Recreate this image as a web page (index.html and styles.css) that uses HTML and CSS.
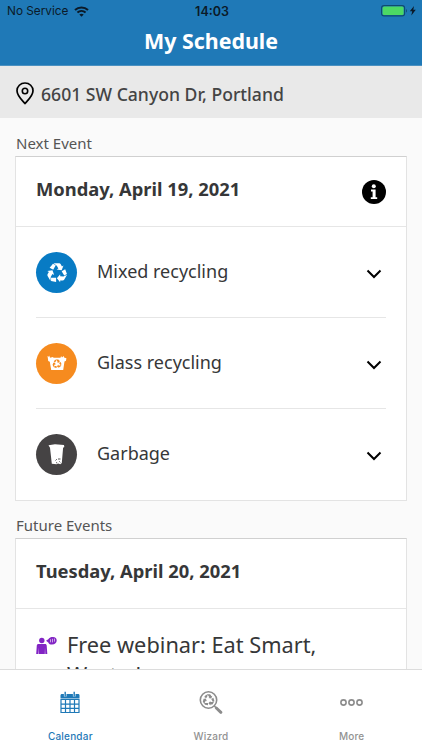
FILE: index.html
```html
<!DOCTYPE html>
<html lang="en">

<head>
    <meta charset="UTF-8">
    <meta name="viewport" content="width=device-width, initial-scale=1.0">
    <title>My Schedule</title>
    <link rel="stylesheet" href="styles.css">
</head>

<body>
    <!-- Shared recycling symbol -->
    <svg class="symbols" width="0" height="0">
        <symbol id="recycle" viewBox="0 0 24 24">
            <g id="recycle-arrow">
                <path d="M8.2 2.5h6.1c.8 0 1.400.4 1.800 1.100l1.300 2.300 1.700-1-2 5.300-5.500-1 1.900-1.100-1.700-3z" />
                <path d="M7.600 3l3 1.700-2.700 4.800-3.900-2.200z" />
            </g>
            <use href="#recycle-arrow" transform="rotate(120 12 13)" />
            <use href="#recycle-arrow" transform="rotate(240 12 13)" />
        </symbol>
    </svg>

    <div class="app">
        <header class="header">
            <div class="status-bar">
                <div class="status-left">
                    <span>No Service</span>
                    <svg width="15" height="11" viewBox="0 0 15 11">
                        <path d="M1 4C4.700.6 10.300.6 14 4" fill="none" stroke="#0b1a28" stroke-width="2.100" />
                        <path d="M3.400 6.500c2.300-2 5.900-2 8.200 0" fill="none" stroke="#0b1a28" stroke-width="2" />
                        <path d="M5.300 8.500c1.300-1.100 3.100-1.100 4.400 0L7.500 10.700z" fill="#0b1a28" />
                    </svg>
                </div>
                <div class="status-time">14:03</div>
                <div class="status-right">
                    <svg width="36" height="12" viewBox="0 0 36 12">
                        <rect x=".6" y=".6" width="23" height="10.300" rx="2.500" fill="none" stroke="#0f4a70" stroke-width="1.100" />
                        <rect x="1.600" y="1.600" width="21" height="8.300" rx="1.500" fill="#4cd964" />
                        <path d="M25 4v3.600c1.200-.4 1.200-3.200 0-3.600z" fill="#0f4a70" />
                        <path d="M33 .9l-4.200 5.400h2.400l-.9 4.200 4.500-5.700h-2.500z" fill="#0b1a28" />
                    </svg>
                </div>
            </div>
            <h1 class="title">My Schedule</h1>
        </header>

        <div class="address">
            <svg width="18" height="23" viewBox="0 0 18 23">
                <path d="M9 1C4.500 1 1 4.400 1 8.700c0 5 5.200 9.600 8 12.800 2.800-3.200 8-7.800 8-12.800C17 4.400 13.500 1 9 1z" fill="none" stroke="#000" stroke-width="1.700" />
                <circle cx="9" cy="9" r="2.700" fill="none" stroke="#000" stroke-width="1.600" />
            </svg>
            <span>6601 SW Canyon Dr, Portland</span>
        </div>

        <main class="content">
            <h2 class="section-label">Next Event</h2>
            <section class="card">
                <div class="card-header">
                    <span>Monday, April 19, 2021</span>
                    <svg class="info" width="24" height="24" viewBox="0 0 24 24">
                        <circle cx="12" cy="12" r="12" fill="#000" />
                        <circle cx="11.800" cy="6.200" r="2" fill="#fff" />
                        <path d="M9 9.600h4.600v7.600h1.600v1.800H8.800v-1.800h1.800v-5.800H9z" fill="#fff" />
                    </svg>
                </div>
                <div class="rows">
                    <div class="row">
                        <span class="badge badge-mixed">
                            <svg width="22" height="22" fill="#fff"><use href="#recycle" /></svg>
                        </span>
                        <span class="row-name">Mixed recycling</span>
                        <svg class="chevron" width="16" height="10" viewBox="0 0 16 10"><path d="M1.500 1.500L8 8l6.500-6.500" /></svg>
                    </div>
                    <div class="row">
                        <span class="badge badge-glass">
                            <svg width="20" height="16" viewBox="0 0 20 16">
                                <path d="M.5 1l1.300.7.4-1.200.8 2.300 3-.9.5.9h7l.6-1.800.9 1.500 1.800-1.500.3 1.600 2.300.6-.4 2.500-1.500.8-1.300 8.500H4.200L2.800 6.800l-1.600-.9-.3-2.400z" fill="#fff" />
                                <svg x="5" y="3.400" width="10" height="10" fill="#f68b1f"><use href="#recycle" /></svg>
                            </svg>
                        </span>
                        <span class="row-name">Glass recycling</span>
                        <svg class="chevron" width="16" height="10" viewBox="0 0 16 10"><path d="M1.500 1.500L8 8l6.500-6.500" /></svg>
                    </div>
                    <div class="row">
                        <span class="badge badge-garbage">
                            <svg width="17" height="21" viewBox="0 0 17 21">
                                <path d="M.5 1.200L7 .3l9 .8.3 2-1.200.7-1.300 15.200-1.500 1.200-2.200-.6-1.500.7-4.800-.5L2 3.800z" fill="#fff" />
                                <path d="M7.500 16.500l1.300-1.300M10 15h2.500M8 18.600l1.200.3M11.300 17.300l1 1.100" stroke="#454344" stroke-width=".9" />
                            </svg>
                        </span>
                        <span class="row-name">Garbage</span>
                        <svg class="chevron" width="16" height="10" viewBox="0 0 16 10"><path d="M1.500 1.500L8 8l6.500-6.500" /></svg>
                    </div>
                </div>
            </section>

            <h2 class="section-label section-label-future">Future Events</h2>
            <section class="card">
                <div class="card-header">
                    <span>Tuesday, April 20, 2021</span>
                </div>
                <div class="event">
                    <svg class="event-icon" width="21" height="18" viewBox="0 0 21 18" fill="#8224c4">
                        <circle cx="5.800" cy="3.500" r="2.700" />
                        <path d="M2.500 7h6.600c1 0 1.500.6 1.600 1.500l.6 8.500H9.300L9 10.500l-.2 6.500H2.700l-.2-6.500L2.200 17H.2l.6-8.500C.9 7.600 1.500 7 2.500 7z" />
                        <path d="M10 3.800l2.300-1.500C13.300.7 15 .1 17 .1c2.400 0 3.700 1.300 3.700 3.400S19 7.600 16 7.600c-1.900 0-3.100-.7-3.700-2.200z" />
                        <path d="M14.500 2.300v3M16.500 1.800v3.600M18.500 1.600v3" stroke="#fff" stroke-width=".6" />
                    </svg>
                    <span class="event-name">Free webinar: Eat Smart,<br>Waste Less</span>
                </div>
            </section>
        </main>

        <nav class="tabs">
            <div class="tab tab-active">
                <svg width="20" height="24" viewBox="0 0 20 24">
                    <path d="M.5 4.500c0-1 .5-1.500 1.500-1.500h16c1 0 1.500.5 1.500 1.500v3H.5z" fill="#1f79b7" />
                    <path d="M5.200 1v4.500M14.200 1v4.500" stroke="#fff" stroke-width="2.600" />
                    <path d="M5.200.8v4.700M14.200.8v4.700" stroke="#1f79b7" stroke-width="1.400" />
                    <path d="M1 8.500v13h18v-13zM1 13.200h18M1 17.400h18M5.500 8.500v13M10 8.500v13M14.500 8.500v13" fill="none" stroke="#1f79b7" stroke-width="1.200" />
                </svg>
                <span>Calendar</span>
            </div>
            <div class="tab">
                <svg width="26" height="24" viewBox="0 0 26 24">
                    <circle cx="10.500" cy="9" r="8.200" fill="none" stroke="#8c8c8c" stroke-width="1.600" />
                    <svg x="4" y="2" width="13" height="13" fill="#8c8c8c"><use href="#recycle" /></svg>
                    <path d="M16.300 15l1.800 1.800" stroke="#8c8c8c" stroke-width="1.500" />
                    <path d="M18.300 17l4.600 4.300" stroke="#8c8c8c" stroke-width="3" stroke-linecap="round" />
                </svg>
                <span>Wizard</span>
            </div>
            <div class="tab">
                <svg width="24" height="24" viewBox="0 0 24 24" fill="none" stroke="#8c8c8c" stroke-width="1.600">
                    <circle cx="3.500" cy="11.500" r="2.600" />
                    <circle cx="11.500" cy="11.500" r="2.600" />
                    <circle cx="19.500" cy="11.500" r="2.600" />
                </svg>
                <span>More</span>
            </div>
        </nav>
    </div>
</body>

</html>
```
FILE: styles.css
```css
* {
    box-sizing: border-box;
}

body {
    margin: 0;
    font-family: "Noto Sans", sans-serif;
    color: #363738;
    background-color: #fafafa;
}

.symbols {
    display: block;
}

.app {
    display: flex;
    flex-direction: column;
    height: 750px;
    overflow: hidden;
}

.header {
    flex: none;
    height: 66px;
    background-color: #1f79b7;
    border-bottom: 1px solid #4b91c1;
}

/* Status bar */
.status-bar {
    display: grid;
    grid-template-columns: 1fr auto 1fr;
    align-items: center;
    height: 22px;
    padding: 0 5px 0 7px;
    font-family: Inter, sans-serif;
    font-size: 11.8px;
    color: #0b1a28;
}

.status-left {
    display: flex;
    align-items: center;
    gap: 6px;
}

.status-time {
    font-size: 12.5px;
    font-weight: 600;
}

.status-right {
    display: flex;
    justify-content: flex-end;
}

.title {
    margin: 4px 0 0;
    font-size: 21.4px;
    line-height: 30px;
    text-align: center;
    color: #fff;
}

/* Address strip */
.address {
    flex: none;
    display: flex;
    align-items: center;
    gap: 7px;
    height: 52px;
    padding: 3px 16px 0;
    font-size: 17.6px;
    font-weight: 500;
    color: #444;
    background-color: #e9e9e9;
}

.content {
    flex: 1;
    min-height: 0;
    overflow: hidden;
    padding: 16px 15px 0;
}

.section-label {
    height: 22px;
    margin: 0;
    padding-left: 1px;
    font-size: 15px;
    font-weight: 400;
    line-height: 19px;
    color: #555;
}

.section-label-future {
    margin-top: 15px;
}

/* Cards */
.card {
    background-color: #fff;
    border: 1px solid #e3e3e3;
    border-top-color: #d0d0d0;
}

.card-header {
    display: flex;
    justify-content: space-between;
    align-items: center;
    height: 70px;
    padding: 0 20px;
    font-size: 18.35px;
    font-weight: 700;
    line-height: 26px;
    border-bottom: 1px solid #e6e6e6;
}

.card-header span {
    margin-bottom: 5px;
}

.rows {
    padding: 0 20px;
}

.row {
    display: flex;
    align-items: center;
    height: 91px;
    border-bottom: 1px solid #e6e6e6;
}

.row:last-child {
    border-bottom: none;
}

.badge {
    display: flex;
    justify-content: center;
    align-items: center;
    width: 41px;
    height: 41px;
    border-radius: 50%;
}

.badge-mixed {
    background-color: #087bc4;
}

.badge-glass {
    background-color: #f68b1f;
}

.badge-garbage {
    background-color: #454344;
}

.row-name {
    flex: 1;
    padding: 0 0 3px 20px;
    font-size: 18px;
}

.chevron {
    margin: 3px 4.5px 0 0;
    fill: none;
    stroke: #000;
    stroke-width: 2;
}

.event {
    display: flex;
    gap: 10px;
    padding: 21px 20px 0;
}

.event-icon {
    margin-top: 7px;
}

.event-name {
    font-size: 21.75px;
    line-height: 30px;
}

/* Bottom tabs */
.tabs {
    flex: none;
    display: grid;
    grid-template-columns: repeat(3, 1fr);
    height: 81px;
    background-color: #fff;
    border-top: 1px solid #dcdcdc;
}

.tab {
    display: flex;
    flex-direction: column;
    align-items: center;
    gap: 13px;
    padding-top: 21px;
    font-family: Inter, sans-serif;
    font-size: 10px;
    font-weight: 500;
    line-height: 16px;
    letter-spacing: 0.2px;
    color: #929292;
}

.tab-active {
    color: #1f79b7;
}
```
